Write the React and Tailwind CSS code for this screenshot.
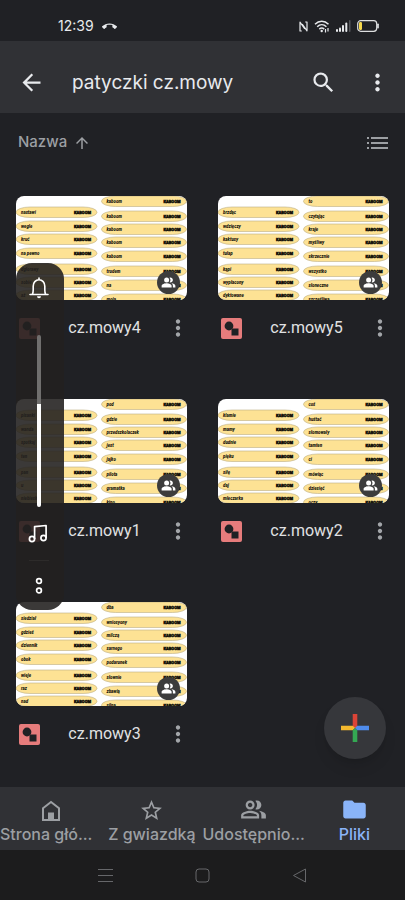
import { useState } from 'react';
import {
  MdArrowBack,
  MdArrowUpward,
  MdCallEnd,
  MdFolder,
  MdMoreVert,
  MdOutlinePeopleAlt,
  MdPeopleAlt,
  MdSearch,
  MdStarBorder,
} from 'react-icons/md';

const leftRows = [16, 30, 43, 57, 73, 86, 99];
const rightRows = [5, 20, 33, 46, 60, 75, 89, 103];

const files = [
  {
    name: 'cz.mowy4',
    left: ['nastawi', 'wegle', 'kruć', 'na pewno', 'dglorawy', 'sobie', 'aż'],
    right: ['kaboom', 'kaboom', 'kaboom', 'kaboom', 'kaboom', 'trudem', 'na', 'moja'],
  },
  {
    name: 'cz.mowy5',
    left: ['brzdąc', 'wdzięczy', 'kaktusy', 'tulap', 'kąpi', 'wypłacony', 'dyktowane'],
    right: ['to', 'czytając', 'kraje', 'myśliwy', 'skrzecznie', 'wszystko', 'słoneczne', 'szczęśliwa'],
  },
  {
    name: 'cz.mowy1',
    left: ['pisanki', 'wanda', 'spotkaj', 'ten', 'pan', 'u', 'niebieski'],
    right: ['pod', 'gdzie', 'przedszkolaczek', 'jest', 'jajko', 'pilota', 'gramatka', 'kino'],
  },
  {
    name: 'cz.mowy2',
    left: ['klamie', 'mamy', 'dudnie', 'pięku', 'siłę', 'daj', 'mleczarka'],
    right: ['coś', 'huśtać', 'słomowały', 'tamten', 'ci', 'mówiąc', 'dziesięć', 'oczy'],
  },
  {
    name: 'cz.mowy3',
    left: ['siedział', 'gdzieś', 'dziennik', 'obok', 'wieje', 'raz', 'nad'],
    right: ['dba', 'wniosyony', 'milczą', 'sarnego', 'podarunek', 'słownie', 'zbawią', 'silna'],
  },
];

function Stick({ x, y, width, word }) {
  return (
    <g>
      <rect x={x} y={y - 5} width={width} height="10.5" rx="14" ry="5.2" fill="#fde294" stroke="#bcae84" strokeWidth="0.6" />
      <text x={x + 5} y={y + 1.5} fontSize="4.4" fontWeight="900" fontStyle="italic" fill="#17140c">{word}</text>
      <text x={x + width - 23} y={y + 1.5} fontSize="4" fontWeight="900" fill="#17140c" stroke="#17140c" strokeWidth="0.5">KABOOM</text>
    </g>
  );
}

function Thumbnail({ left, right }) {
  return (
    <svg viewBox="0 0 171 104" className="block w-full rounded-lg bg-white font-[Roboto,sans-serif]">
      {left.map((word, i) => <Stick key={i} x={0} y={leftRows[i]} width={81} word={word} />)}
      {right.map((word, i) => <Stick key={i} x={85.5} y={rightRows[i]} width={85} word={word} />)}
    </svg>
  );
}

function DrawingIcon() {
  return (
    <svg viewBox="0 0 21 21" className="size-[21px] shrink-0">
      <rect width="21" height="21" rx="2" fill="#e67c7c" />
      <circle cx="8" cy="8" r="4.4" fill="#202124" />
      <rect x="10.5" y="10.5" width="7" height="7" fill="#202124" />
    </svg>
  );
}

function FileCard({ file }) {
  return (
    <article>
      <div className="relative">
        <Thumbnail left={file.left} right={file.right} />
        <span className="absolute right-[7px] bottom-[6px] flex size-[23px] items-center justify-center rounded-full bg-[#3c3c3c] text-white">
          <MdPeopleAlt size={15} />
        </span>
      </div>
      <div className="flex h-14 items-center pl-[3px]">
        <DrawingIcon />
        <h2 className="flex-1 pl-1 text-center font-[Roboto,sans-serif] text-base text-[#e0e1e3]">{file.name}</h2>
        <button aria-label={`Więcej działań: ${file.name}`} className="-mr-1 text-[#a2a5a9]">
          <MdMoreVert size={26} />
        </button>
      </div>
    </article>
  );
}

function StatusBar() {
  return (
    <div className="flex h-[41px] items-end justify-between pr-[26px] pb-[6px] pl-[58px] text-[#e8eaed]">
      <div className="flex items-center gap-2">
        <span className="text-sm leading-[18px]">12:39</span>
        <MdCallEnd size={15} />
      </div>
      <div className="flex h-[18px] items-center gap-[6px]">
        <svg width="9" height="11" viewBox="0 0 9 11" fill="none" stroke="currentColor" strokeWidth="1.2" strokeLinejoin="round">
          <path d="M2.800 10H1V1.200L5.800 8M6.200 1H8v8.800L3.200 3" />
        </svg>
        <svg width="16" height="13" viewBox="0 0 16 13" fill="none" stroke="currentColor" strokeWidth="1.5">
          <path d="M1 4.200C5 .3 10.500.3 14.500 4.200M3.200 6.700c2.700-2.500 6.500-2.500 9.200 0M5.300 9.100c1.500-1.300 3.500-1.300 4.900 0" />
          <circle cx="7.700" cy="11" r="1.200" fill="currentColor" stroke="none" />
          <path d="M11.500 9v3.500M14 8v3.500" strokeWidth="1.200" />
        </svg>
        <svg width="15" height="12" viewBox="0 0 15 12" fill="currentColor">
          <rect x="0" y="9" width="2" height="3" rx="1" />
          <rect x="3" y="7.500" width="2" height="4.500" rx="1" />
          <rect x="6" y="5" width="2" height="7" rx="1" />
          <rect x="9.300" y="2.500" width="2" height="9.500" rx="1" />
          <rect x="13" y="0" width="1.500" height="12" rx="0.700" fill="#55575b" />
        </svg>
        <svg width="22" height="12" viewBox="0 0 22 12" fill="none">
          <rect x="0.700" y="0.700" width="19" height="10.600" rx="3" stroke="#dedfe0" strokeWidth="1.200" />
          <rect x="2" y="2" width="3" height="8" rx="1.200" fill="#f6d84c" />
          <path d="M21 4.300v3.400" stroke="#e8eaed" strokeWidth="1.600" strokeLinecap="round" />
        </svg>
      </div>
    </div>
  );
}

function VolumePanel() {
  const [volume, setVolume] = useState(60);

  return (
    <aside className="absolute top-[263px] left-4 flex h-[347px] w-12 flex-col items-center rounded-2xl bg-[#232120]/89 pr-[2px] text-white">
      <button aria-label="Dzwonek" className="mt-[14px]">
        <svg width="22" height="22" viewBox="0 0 22 22" fill="none" stroke="currentColor" strokeWidth="1.600" strokeLinecap="round" strokeLinejoin="round">
          <path d="M11 1v1.800M2 17.500h18M4.300 17.500c.8-1.200.9-2.600.9-4.500V9.200c0-3.600 2.400-6.400 5.800-6.400s5.800 2.800 5.800 6.400V13c0 1.900.1 3.300.9 4.500" />
          <path d="M9 19.200h4a2 2 0 0 1-4 0z" fill="currentColor" stroke="none" />
        </svg>
      </button>
      <input
        type="range"
        aria-label="Głośność"
        value={volume}
        onChange={(e) => setVolume(+e.target.value)}
        className="mt-9 h-[172px] w-1 appearance-none rounded-full bg-linear-to-t from-white from-60% to-[#706f6e] to-60% [direction:rtl] [writing-mode:vertical-lr] [&::-webkit-slider-thumb]:appearance-none [&::-webkit-slider-thumb]:opacity-0"
      />
      <button aria-label="Multimedia" className="mt-4 pr-[2px]">
        <svg width="20" height="20" viewBox="0 0 20 20" fill="none" stroke="currentColor" strokeWidth="1.700">
          <circle cx="4" cy="16" r="2.600" />
          <circle cx="15.500" cy="15" r="2.600" />
          <path d="M6.600 16V3.600L18.100 2.500V15" strokeLinejoin="round" />
        </svg>
      </button>
      <hr className="mt-[17px] w-5 border-[#2d2b2a]" />
      <button aria-label="Więcej ustawień" className="mt-4">
        <svg width="10" height="18" viewBox="0 0 10 18" fill="none" stroke="currentColor" strokeWidth="1.700">
          <circle cx="5" cy="4" r="2.400" />
          <circle cx="5" cy="13.500" r="2.400" />
        </svg>
      </button>
    </aside>
  );
}

function HomeIcon() {
  return (
    <svg width="24" height="24" viewBox="0 0 24 24">
      <path d="M4 9.200l8-6.200 8 6.200V21H4z" fill="none" stroke="currentColor" strokeWidth="2" />
      <path d="M9 13.500h6V21H9z" fill="currentColor" />
    </svg>
  );
}

const tabs = [
  { label: 'Strona głó...', icon: <HomeIcon />, long: true },
  { label: 'Z gwiazdką', icon: <MdStarBorder size={25} /> },
  { label: 'Udostępnio...', icon: <MdOutlinePeopleAlt size={27} />, long: true },
  { label: 'Pliki', icon: <MdFolder size={27} />, active: true },
];

export default function App() {
  return (
    <div className="relative flex min-h-screen flex-col bg-[#202125] font-[Inter,sans-serif]">
      <StatusBar />

      <header className="flex h-[72px] items-center bg-[#303135] pt-[10px] pr-[14px] pl-[18px] text-[#e8eaed]">
        <button aria-label="Wstecz"><MdArrowBack size={27} /></button>
        <h1 className="flex-1 pt-0.5 pl-[27px] text-[19px]">patyczki cz.mowy</h1>
        <button aria-label="Szukaj"><MdSearch size={27} /></button>
        <button aria-label="Więcej" className="ml-[27px]"><MdMoreVert size={27} /></button>
      </header>

      <main className="relative flex-1">
        <div className="flex h-[59px] items-center justify-between pr-[17px] pl-[18px] text-[#9c9fa3]">
          <button className="flex items-center gap-[6px] text-[15px] font-medium">
            Nazwa <MdArrowUpward size={18} />
          </button>
          <button aria-label="Widok listy">
            <svg width="21" height="12" viewBox="0 0 21 12" fill="currentColor">
              <path d="M0 0h2v2H0zM4 0h17v2H4zM0 5h2v2H0zM4 5h17v2H4zM0 10h2v2H0zM4 10h17v2H4z" />
            </svg>
          </button>
        </div>

        <section className="grid grid-cols-2 gap-x-[31px] gap-y-[43px] px-4 pt-6">
          {files.map((file) => <FileCard key={file.name} file={file} />)}
        </section>

        <button aria-label="Nowy" className="absolute right-[19px] bottom-[28px] flex size-[62px] items-center justify-center rounded-full bg-[#36373b] shadow-lg">
          <svg width="28" height="28" viewBox="0 0 28 28">
            <path d="M11.700 0h4.600v14h-4.600z" fill="#db4437" />
            <path d="M0 11.700h11.700L14 14l-2.300 2.300H0z" fill="#f4b92e" />
            <path d="M11.700 16.300L14 14l2.300 2.300V28h-4.600z" fill="#34a853" />
            <path d="M14 14l2.300-2.300H28v4.600H16.300z" fill="#4f8cec" />
          </svg>
        </button>
      </main>

      <nav className="grid h-[63px] grid-cols-4 bg-[#303135]">
        {tabs.map((tab) => (
          <a
            key={tab.label}
            href="#"
            className={`flex flex-col items-center text-base leading-5 font-medium whitespace-nowrap ${tab.active ? 'text-[#8ab4f8]' : 'text-[#9c9fa3]'}`}
          >
            <span className="flex h-[37px] items-end pb-px">{tab.icon}</span>
            <span className={tab.long ? 'self-start' : ''}>{tab.label}</span>
          </a>
        ))}
      </nav>

      <div className="flex h-[50px] items-center justify-center gap-[82px] bg-[#1c1c1d] text-[#66676a]">
        <button aria-label="Ostatnie">
          <svg width="15" height="15" viewBox="0 0 15 15" stroke="currentColor"><path d="M0 1.500h15M0 7.500h15M0 13.500h15" /></svg>
        </button>
        <button aria-label="Ekran główny">
          <svg width="15" height="15" viewBox="0 0 15 15" fill="none" stroke="currentColor"><rect x="1" y="1" width="13" height="13" rx="3" /></svg>
        </button>
        <button aria-label="Cofnij">
          <svg width="15" height="15" viewBox="0 0 15 15" fill="none" stroke="currentColor" strokeLinejoin="round"><path d="M13.500 1v13L1.500 7.500z" /></svg>
        </button>
      </div>

      <VolumePanel />
    </div>
  );
}
